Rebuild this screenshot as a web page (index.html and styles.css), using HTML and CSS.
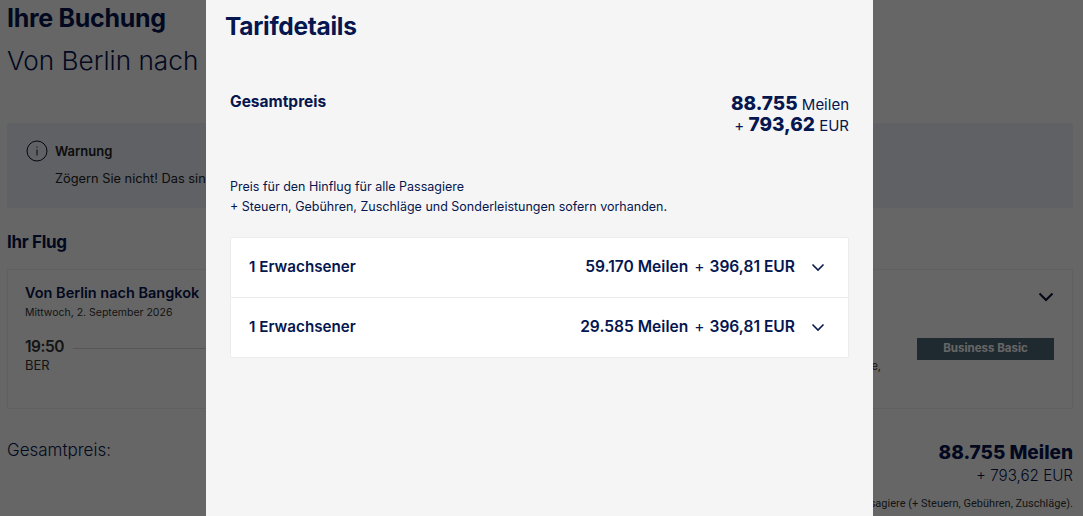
FILE: index.html
```html
<!DOCTYPE html>
<html lang="de">
<head>
  <meta charset="UTF-8">
  <meta name="viewport" content="width=device-width, initial-scale=1.0">
  <title>Ihre Buchung</title>
  <link rel="stylesheet" href="styles.css">
</head>
<body>
  <div class="page">
    <h1>Ihre Buchung</h1>
    <p class="route">Von Berlin nach Bangkok</p>

    <!--WARNING-->
    <div class="warning">
      <svg class="info-icon" width="22" height="22" viewBox="0 0 22 22" fill="none" stroke="#0a1233" stroke-width="1">
        <circle cx="11" cy="11" r="10"/>
        <path d="M11 9.5v6M11 6.5v1.2"/>
      </svg>
      <div>
        <p class="warning-title">Warnung</p>
        <p class="warning-text">Zögern Sie nicht! Das sind</p>
      </div>
    </div>

    <!--FLIGHT-->
    <h2>Ihr Flug</h2>
    <div class="flight-card">
      <div class="flight-main">
        <p class="flight-title">Von Berlin nach Bangkok</p>
        <p class="flight-date">Mittwoch, 2. September 2026</p>
        <div class="time-row">
          <span class="time">19:50</span>
          <span class="time-line"></span>
        </div>
        <p class="airport">BER</p>
      </div>
      <p class="flight-note">e,</p>
      <div class="flight-side">
        <svg class="card-chevron" width="16" height="10" viewBox="0 0 16 10" fill="none" stroke="#0a1233" stroke-width="2">
          <path d="M1.5 1.5 8 8l6.5-6.500"/>
        </svg>
        <div class="fare-badge">Business Basic</div>
      </div>
    </div>

    <!--TOTAL-->
    <div class="total">
      <p class="total-label">Gesamtpreis:</p>
      <div class="total-values">
        <p class="total-miles">88.755 Meilen</p>
        <p class="total-eur">+ 793,62 EUR</p>
        <p class="total-note">Preis für alle Passagiere (+ Steuern, Gebühren, Zuschläge).</p>
      </div>
    </div>
  </div>

  <div class="overlay">
    <div class="modal">
      <h2 class="modal-title">Tarifdetails</h2>

      <div class="price-row">
        <span class="price-label">Gesamtpreis</span>
        <div class="price-values">
          <div><strong>88.755</strong> Meilen</div>
          <div>+ <strong>793,62</strong> EUR</div>
        </div>
      </div>

      <p class="price-info">Preis für den Hinflug für alle Passagiere<br>+ Steuern, Gebühren, Zuschläge und Sonderleistungen sofern vorhanden.</p>

      <div class="passengers">
        <div class="passenger">
          <span class="passenger-name">1 Erwachsener</span>
          <span class="passenger-price">59.170 Meilen <i>+</i> 396,81 EUR</span>
          <svg class="chevron" width="14" height="9" viewBox="0 0 14 9" fill="none" stroke="#0a1a4f" stroke-width="1.6">
            <path d="M1.5 1.5 7 7l5.500-5.500"/>
          </svg>
        </div>
        <div class="passenger">
          <span class="passenger-name">1 Erwachsener</span>
          <span class="passenger-price">29.585 Meilen <i>+</i> 396,81 EUR</span>
          <svg class="chevron" width="14" height="9" viewBox="0 0 14 9" fill="none" stroke="#0a1a4f" stroke-width="1.6">
            <path d="M1.5 1.5 7 7l5.500-5.500"/>
          </svg>
        </div>
      </div>
    </div>
  </div>
</body>
</html>
```

FILE: styles.css
```css
html, body {
  height: 100%;
}
body {
  margin: 0;
  overflow: hidden;
  font-family: Inter, "Noto Sans", sans-serif;
  background-color: #ffffff;
  color: #06164f;
}
p, h1, h2 {
  margin: 0;
}
.page {
  padding: 3px 10px 0 7px;
}
h1 {
  font-size: 25px;
  line-height: 30px;
  font-weight: 700;
  letter-spacing: -0.3px;
}
.route {
  margin-top: 11px;
  font-size: 26.2px;
  line-height: 34px;
  font-weight: 300;
}
.warning {
  display: flex;
  gap: 7px;
  margin-top: 45px;
  height: 85px;
  padding: 17px 19px 0;
  box-sizing: border-box;
  background: #eef2fa;
}
.warning-title {
  margin-top: 1px;
  font-size: 13px;
  line-height: 20px;
  font-weight: 600;
  color: #222;
}
.warning-text {
  margin-top: 8px;
  font-size: 12.8px;
  line-height: 20px;
  color: #222;
}
h2 {
  margin-top: 23px;
  font-size: 17px;
  line-height: 22px;
  font-weight: 700;
  letter-spacing: -0.3px;
}
.flight-card {
  display: flex;
  height: 140px;
  margin-top: 16px;
  padding: 13px 0 0 17px;
  box-sizing: border-box;
  border: 1px solid #f0f0f0;
  background: #ffffff;
}
.flight-main {
  flex: 1;
}
.flight-title {
  font-size: 14.5px;
  line-height: 20px;
  font-weight: 600;
}
.flight-date {
  margin-top: 2px;
  font-size: 10.5px;
  line-height: 16px;
  color: #333;
}
.time-row {
  display: flex;
  align-items: center;
  gap: 9px;
  margin-top: 16px;
}
.time {
  font-size: 15.5px;
  line-height: 20px;
  font-weight: 600;
  letter-spacing: -0.5px;
  color: #333;
}
.time-line {
  flex: 1;
  margin-top: 2px;
  border-top: 1px solid #d8d8d8;
}
.airport {
  margin-top: -1px;
  font-size: 13px;
  line-height: 18px;
  color: #333;
}
.flight-note {
  align-self: flex-start;
  margin: 75px 36px 0 0;
  font-size: 11px;
  line-height: 16px;
  color: #333;
}
.flight-side {
  display: flex;
  flex-direction: column;
  align-items: flex-end;
  width: 137px;
  padding-right: 18px;
}
.card-chevron {
  margin-top: 9px;
}
.fare-badge {
  width: 137px;
  height: 22px;
  margin-top: 36px;
  font-size: 11.5px;
  line-height: 21px;
  font-weight: 700;
  text-align: center;
  color: #ffffff;
  background: #4d6978;
}
.total {
  display: flex;
  justify-content: space-between;
  margin-top: 30px;
}
.total-label {
  font-size: 17px;
  line-height: 22px;
  font-weight: 300;
}
.total-values {
  margin-top: 2px;
  text-align: right;
}
.total-miles {
  font-size: 19px;
  line-height: 24px;
  font-weight: 800;
}
.total-eur {
  font-size: 15.2px;
  line-height: 22px;
  font-weight: 300;
}
.total-note {
  margin-top: 10px;
  font-family: Roboto, sans-serif;
  font-size: 11px;
  line-height: 14px;
  color: #333;
}

/*overlay and modal*/
.overlay {
  position: fixed;
  inset: 0;
  padding-right: 4px;
  display: flex;
  justify-content: center;
  background: rgba(0, 0, 0, 0.6);
}
.modal {
  width: 667px;
  padding: 0 24px;
  box-sizing: border-box;
  background: #f5f5f5;
}
.modal-title {
  margin-top: 11px;
  margin-left: -5px;
  font-size: 24.5px;
  line-height: 30px;
  font-weight: 700;
  letter-spacing: -0.3px;
}
.price-row {
  display: flex;
  justify-content: space-between;
  margin-top: 51px;
}
.price-label {
  font-size: 15.5px;
  line-height: 20px;
  font-weight: 700;
}
.price-values {
  margin-top: 2px;
  height: 43px;
  font-size: 15px;
  line-height: 20px;
  text-align: right;
}
.price-values strong {
  font-size: 19px;
  font-weight: 800;
}
.price-info {
  margin-top: 40px;
  font-size: 12.5px;
  line-height: 20px;
}
.passengers {
  margin-top: 20px;
  background: #ffffff;
  border: 1px solid #ececec;
  border-radius: 2px;
}
.passenger {
  display: flex;
  align-items: center;
  height: 59px;
  padding: 0 23px 0 18px;
  font-size: 15.2px;
  font-weight: 600;
}
.passenger + .passenger {
  border-top: 1px solid #ececec;
}
.passenger-name {
  flex: 1;
  margin-top: -2px;
}
.passenger-price {
  margin-top: -2px;
  font-size: 15.6px;
}
.passenger-price i {
  margin: 0 1px 0 2px;
  font-style: normal;
  font-weight: 400;
}
.chevron {
  margin-left: 16px;
}
```
